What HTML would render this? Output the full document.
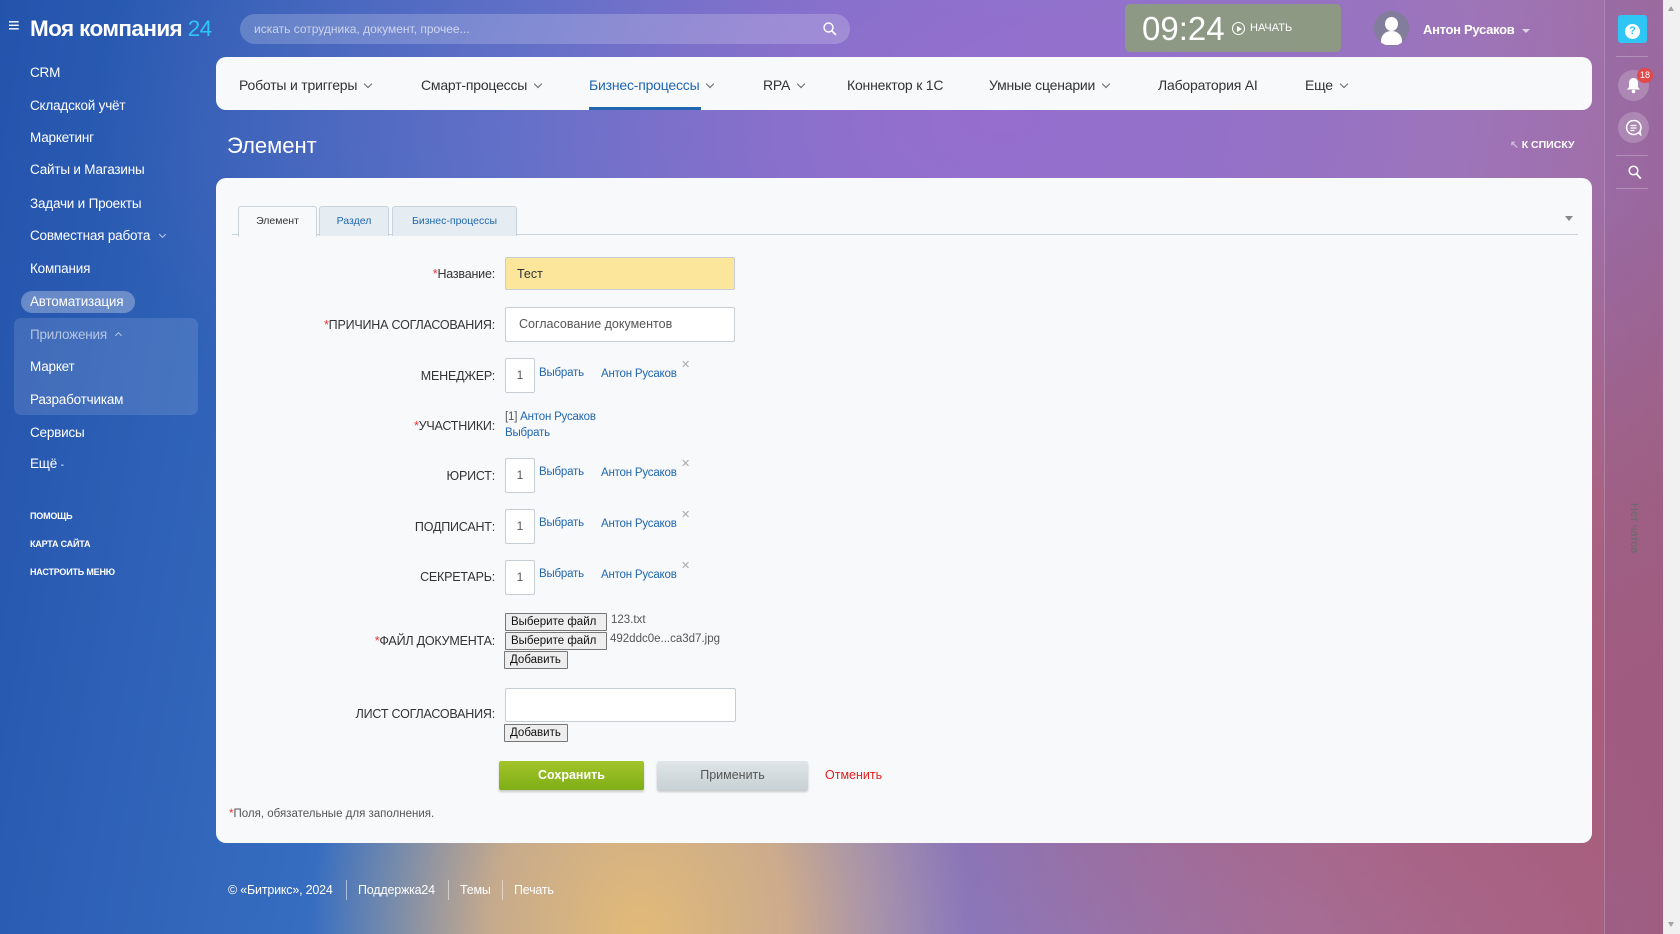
<!DOCTYPE html>
<html><head><meta charset="utf-8"><style>
*{box-sizing:border-box;margin:0;padding:0}
body{width:1680px;height:934px;overflow:hidden;font-family:"Liberation Sans",sans-serif;position:relative;
background:
radial-gradient(ellipse 330px 420px at 640px 934px, rgba(226,186,120,1) 0%, rgba(220,180,130,.85) 45%, rgba(220,180,130,0) 100%),
radial-gradient(ellipse 700px 500px at 1500px 700px, rgba(170,90,120,.9) 0%, rgba(170,90,120,0) 100%),
radial-gradient(ellipse 900px 500px at 1000px 120px, rgba(150,110,205,1) 0%, rgba(150,110,205,0) 100%),
linear-gradient(100deg,#2453ac 0%,#3a72c4 30%,#7d7acb 55%,#a37aa8 80%,#a6607e 100%);}
.a{position:absolute}
.w{color:#fff}
.menu div{position:absolute;left:30px;font-size:13.5px;color:#fff;white-space:nowrap;letter-spacing:-.2px}
.small{font-size:9px!important;font-weight:bold}
.card{background:#f8f9fb;border-radius:10px}
.nav span{position:absolute;top:77px;font-size:14px;color:#333;white-space:nowrap;letter-spacing:-.2px}
.chev{display:inline-block;width:6px;height:6px;border-right:1.3px solid #666;border-bottom:1.3px solid #666;transform:rotate(45deg);margin-left:8px;position:relative;top:-3px}
.lbl{position:absolute;right:1185px;font-size:12.5px;color:#333;white-space:nowrap;text-align:right;letter-spacing:-.2px}
.req{color:#e33}
.inp{position:absolute;left:505px;width:230px;height:34px;border:1px solid #c6cdd3;background:#fff;border-radius:2px;font-size:12.5px;color:#555;padding:9px 13px;white-space:nowrap}
.num{position:absolute;left:505px;width:30px;height:35px;border:1px solid #c6cdd3;background:#fff;border-radius:2px;font-size:12px;color:#555;text-align:center;line-height:33px}
.lk{position:absolute;font-size:11.5px;color:#2067b0;white-space:nowrap;letter-spacing:-.2px}
.x{position:absolute;font-size:11px;color:#aaa}
.fb{position:absolute;left:505px;height:18px;border:1px solid #777;background:#eee;font-size:11.5px;color:#111;padding:0 5px;line-height:16px;border-radius:1px;white-space:nowrap;overflow:hidden}
.ft{position:absolute;font-size:11.5px;color:#555;white-space:nowrap}
.tab{position:absolute;top:206px;height:30px;border:1px solid #c9d3dc;border-bottom:none;border-radius:3px 3px 0 0;background:#e6edf2;font-size:10.5px;color:#2067b0;text-align:center;line-height:28px}
.foot{position:absolute;top:883px;font-size:12.5px;color:#fff;letter-spacing:-.2px}
</style></head><body>
<!-- header -->
<div class="a w" style="left:8px;top:15px;font-size:20px">&#8801;</div>
<div class="a w" style="left:30px;top:16px;font-size:22.5px;font-weight:bold;letter-spacing:-.6px">Моя компания <span style="color:#2fc6f6;font-weight:normal">24</span></div>
<div class="a" style="left:240px;top:14px;width:610px;height:30px;border-radius:15px;background:rgba(255,255,255,.2)"><span style="position:absolute;left:14px;top:8px;font-size:12px;color:rgba(255,255,255,.65)">искать сотрудника, документ, прочее...</span>
<svg style="position:absolute;right:12px;top:7px" width="16" height="16" viewBox="0 0 16 16"><circle cx="6.5" cy="6.5" r="4.5" fill="none" stroke="#fff" stroke-width="1.4"/><path d="M10 10l4 4" stroke="#fff" stroke-width="1.6"/></svg></div>
<div class="a" style="left:1125px;top:4px;width:216px;height:48px;border-radius:5px;background:rgba(140,160,120,.85)"><span style="position:absolute;left:17px;top:6px;font-size:33px;color:#fff;font-weight:300">09:24</span>
<span style="position:absolute;left:107px;top:18px;width:13px;height:13px;border:1.3px solid #fff;border-radius:50%"></span><span style="position:absolute;left:112px;top:21.5px;border-left:5px solid #fff;border-top:3px solid transparent;border-bottom:3px solid transparent"></span>
<span style="position:absolute;left:125px;top:18px;font-size:11px;color:#fff">НАЧАТЬ</span></div>
<div class="a" style="left:1374px;top:11px;width:35px;height:35px;border-radius:50%;background:rgba(120,130,140,.7);overflow:hidden"><div style="position:absolute;left:11px;top:6px;width:13px;height:14px;border-radius:50%;background:#fff"></div><div style="position:absolute;left:7px;top:20px;width:21px;height:14px;border-radius:10px 10px 2px 2px;background:#fff"></div></div>
<div class="a w" style="left:1423px;top:22px;font-size:13px;font-weight:bold;letter-spacing:-.3px">Антон Русаков <span style="display:inline-block;border-top:4px solid rgba(255,255,255,.7);border-left:4px solid transparent;border-right:4px solid transparent;vertical-align:middle;margin-left:4px"></span></div>
<!-- right panel -->
<div class="a" style="left:1604px;top:0;width:60px;height:934px;background:rgba(120,90,150,.18);border-left:1px solid rgba(255,255,255,.2)"></div>
<div class="a" style="left:1618px;top:15px;width:29px;height:28px;border-radius:3px;background:#2fc6f6;color:#fff;font-size:14px;font-weight:bold;text-align:center;line-height:28px"><span style="display:inline-block;width:15px;height:15px;border-radius:50%;background:#fff;color:#2fc6f6;font-size:11px;line-height:15px">?</span></div>
<div class="a" style="left:1616px;top:56px;width:32px;height:1px;background:rgba(255,255,255,.25)"></div>
<div class="a" style="left:1618px;top:70px;width:31px;height:31px;border-radius:50%;background:rgba(255,255,255,.2)"><svg style="position:absolute;left:8px;top:7px" width="15" height="17" viewBox="0 0 15 17"><path d="M7.5 1c-3 0-4.5 2.3-4.5 5v4l-2 2.5h13L12 10V6c0-2.7-1.5-5-4.5-5z" fill="#fff"/><circle cx="7.5" cy="14.5" r="1.8" fill="#fff"/></svg></div>
<div class="a" style="left:1637px;top:68px;width:16px;height:15px;border-radius:8px;background:#e3484a;color:#fff;font-size:9px;text-align:center;line-height:15px">18</div>
<div class="a" style="left:1618px;top:112px;width:31px;height:31px;border-radius:50%;background:rgba(255,255,255,.2)"><svg style="position:absolute;left:7px;top:7px" width="17" height="17" viewBox="0 0 17 17"><path d="M8.5 1.5a7 7 0 1 0 5 12l2 2-.5-3.5a7 7 0 0 0-6.5-10.5z" fill="none" stroke="#fff" stroke-width="1.5"/><path d="M5.5 6.5h6M5.5 9h6M5.5 11.5h4" stroke="#fff" stroke-width="1.2"/></svg></div>
<div class="a" style="left:1616px;top:155px;width:32px;height:1px;background:rgba(255,255,255,.25)"></div>
<svg class="a" style="left:1628px;top:165px" width="14" height="15" viewBox="0 0 14 15"><circle cx="5.5" cy="5.5" r="4.3" fill="none" stroke="#fff" stroke-width="1.5"/><path d="M8.5 8.8l4.3 4.8" stroke="#fff" stroke-width="1.8"/></svg>
<div class="a" style="left:1616px;top:188px;width:32px;height:1px;background:rgba(255,255,255,.25)"></div>
<div class="a" style="font-size:11px;color:#6a6a6a;white-space:nowrap;transform:rotate(90deg);transform-origin:0 0;left:1640px;top:503px">Нет чатов</div>
<div class="a" style="left:1663px;top:0;width:17px;height:934px;background:#f1f1f1"></div>
<div class="a" style="left:1668px;top:6px;border-bottom:5px solid #a3a3a3;border-left:3.5px solid transparent;border-right:3.5px solid transparent"></div>
<div class="a" style="left:1668px;top:922px;border-top:5px solid #a3a3a3;border-left:3.5px solid transparent;border-right:3.5px solid transparent"></div>
<!-- left menu -->
<div class="menu">
<div style="top:65px">CRM</div><div style="top:98px">Складской учёт</div><div style="top:130px">Маркетинг</div><div style="top:162px">Сайты и Магазины</div><div style="top:196px">Задачи и Проекты</div><div style="top:228px">Совместная работа <span class="chev" style="border-color:rgba(255,255,255,.7);width:5px;height:5px;margin-left:6px"></span></div><div style="top:261px">Компания</div>
</div>
<div class="a" style="left:21px;top:291px;width:114px;height:22px;border-radius:11px;background:rgba(255,255,255,.3)"></div>
<div class="a" style="left:14px;top:318px;width:184px;height:97px;border-radius:7px;background:rgba(255,255,255,.12)"></div>
<div class="menu">
<div style="top:294px">Автоматизация</div><div style="top:327px;color:rgba(255,255,255,.6)">Приложения <span style="display:inline-block;width:5px;height:5px;border-left:1.3px solid rgba(255,255,255,.6);border-top:1.3px solid rgba(255,255,255,.6);transform:rotate(45deg);margin-left:5px;position:relative;top:-1px"></span></div><div style="top:359px">Маркет</div><div style="top:392px">Разработчикам</div><div style="top:425px">Сервисы</div><div style="top:456px">Ещё <span style="font-size:10px">-</span></div>
<div class="small" style="top:511px">ПОМОЩЬ</div><div class="small" style="top:539px">КАРТА САЙТА</div><div class="small" style="top:567px">НАСТРОИТЬ МЕНЮ</div>
</div>
<!-- top nav -->
<div class="a card" style="left:216px;top:57px;width:1376px;height:53px"></div>
<div class="nav">
<span style="left:239px">Роботы и триггеры<i class="chev"></i></span>
<span style="left:421px">Смарт-процессы<i class="chev"></i></span>
<span style="left:589px;color:#2067b0">Бизнес-процессы<i class="chev"></i></span>
<span style="left:763px">RPA<i class="chev"></i></span>
<span style="left:847px">Коннектор к 1С</span>
<span style="left:989px">Умные сценарии<i class="chev"></i></span>
<span style="left:1158px">Лаборатория AI</span>
<span style="left:1305px">Еще<i class="chev"></i></span>
</div>
<div class="a" style="left:589px;top:107px;width:112px;height:3px;background:#2067b0"></div>
<div class="a w" style="left:227px;top:133px;font-size:22px;font-weight:300">Элемент</div>
<div class="a w" style="left:1510px;top:139px;font-size:10.5px;font-weight:bold"><span style="color:rgba(255,255,255,.5)">↖</span> К СПИСКУ</div>
<!-- main card -->
<div class="a card" style="left:216px;top:178px;width:1376px;height:665px"></div>
<div class="a" style="left:232px;top:234px;width:1346px;height:1px;background:#c9d3dc"></div>
<div class="tab" style="left:238px;width:79px;background:#f8f9fb;color:#333;height:31px">Элемент</div>
<div class="tab" style="left:319px;width:70px">Раздел</div>
<div class="tab" style="left:392px;width:125px">Бизнес-процессы</div>
<div class="a" style="left:1565px;top:216px;border-top:5px solid #888;border-left:4.5px solid transparent;border-right:4.5px solid transparent"></div>

<div class="lbl" style="top:267px"><span class="req">*</span>Название:</div>
<div class="inp" style="top:257px;height:33px;background:#fbe69c;color:#333;padding-left:11px">Тест</div>
<div class="lbl" style="top:318px"><span class="req">*</span>ПРИЧИНА СОГЛАСОВАНИЯ:</div>
<div class="inp" style="top:307px;height:35px">Согласование документов</div>

<div class="lbl" style="top:369px">МЕНЕДЖЕР:</div>
<div class="num" style="top:358px">1</div><div class="lk" style="left:539px;top:367px">Выбрать</div><div class="lk" style="left:601px;top:368px">Антон Русаков</div><div class="x" style="left:681px;top:358px">✕</div>

<div class="lbl" style="top:419px"><span class="req">*</span>УЧАСТНИКИ:</div>
<div class="lk" style="left:505px;top:411px"><span style="color:#555">[1]</span> Антон Русаков</div><div class="lk" style="left:505px;top:427px">Выбрать</div>

<div class="lbl" style="top:469px">ЮРИСТ:</div>
<div class="num" style="top:458px">1</div><div class="lk" style="left:539px;top:466px">Выбрать</div><div class="lk" style="left:601px;top:467px">Антон Русаков</div><div class="x" style="left:681px;top:457px">✕</div>

<div class="lbl" style="top:520px">ПОДПИСАНТ:</div>
<div class="num" style="top:509px">1</div><div class="lk" style="left:539px;top:517px">Выбрать</div><div class="lk" style="left:601px;top:518px">Антон Русаков</div><div class="x" style="left:681px;top:508px">✕</div>

<div class="lbl" style="top:570px">СЕКРЕТАРЬ:</div>
<div class="num" style="top:560px">1</div><div class="lk" style="left:539px;top:568px">Выбрать</div><div class="lk" style="left:601px;top:569px">Антон Русаков</div><div class="x" style="left:681px;top:559px">✕</div>

<div class="lbl" style="top:634px"><span class="req">*</span>ФАЙЛ ДОКУМЕНТА:</div>
<div class="fb" style="top:613px;width:102px">Выберите файл</div><div class="ft" style="left:611px;top:614px">123.txt</div>
<div class="fb" style="top:632px;width:102px">Выберите файл</div><div class="ft" style="left:610px;top:633px">492ddc0e...ca3d7.jpg</div>
<div class="fb" style="top:651px;width:64px;left:504px">Добавить</div>

<div class="lbl" style="top:707px">ЛИСТ СОГЛАСОВАНИЯ:</div>
<div class="inp" style="top:688px;height:34px;left:505px;width:231px"></div>
<div class="fb" style="top:724px;width:64px;left:504px">Добавить</div>

<div class="a" style="left:499px;top:761px;width:145px;height:29px;border-radius:2px;background:linear-gradient(#a2c52a,#7fae16);box-shadow:0 2px 2px rgba(0,0,0,.2);color:#fff;font-size:12.5px;font-weight:bold;text-align:center;line-height:29px">Сохранить</div>
<div class="a" style="left:657px;top:761px;width:151px;height:29px;border-radius:2px;background:linear-gradient(#dfe5e8,#c8d1d5);box-shadow:0 2px 2px rgba(0,0,0,.2);color:#555;font-size:12.5px;text-align:center;line-height:29px">Применить</div>
<div class="a" style="left:825px;top:768px;font-size:12.5px;color:#e02020">Отменить</div>
<div class="a" style="left:229px;top:808px;font-size:11.5px;color:#555"><span class="req">*</span>Поля, обязательные для заполнения.</div>
<!-- footer -->
<div class="foot" style="left:228px">© «Битрикс», 2024</div>
<div class="a" style="left:346px;top:880px;width:1px;height:20px;background:rgba(255,255,255,.5)"></div>
<div class="foot" style="left:358px">Поддержка24</div>
<div class="a" style="left:448px;top:880px;width:1px;height:20px;background:rgba(255,255,255,.5)"></div>
<div class="foot" style="left:460px">Темы</div>
<div class="a" style="left:502px;top:880px;width:1px;height:20px;background:rgba(255,255,255,.5)"></div>
<div class="foot" style="left:514px">Печать</div>
</body></html>
